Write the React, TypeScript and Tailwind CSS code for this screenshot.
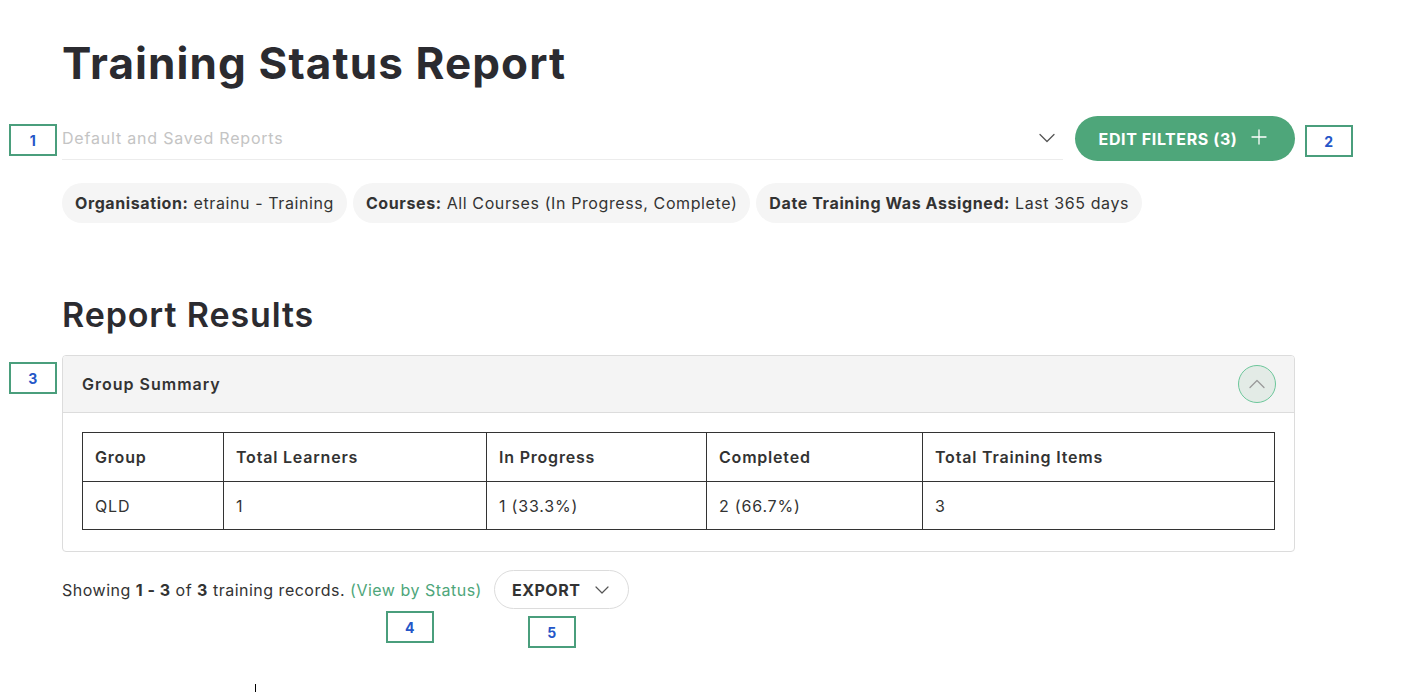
import React from 'react';
import { ChevronDown, ChevronUp, Plus } from 'lucide-react';

const font = { fontFamily: 'Inter, "Noto Sans", sans-serif' };

type Row = { group: string; learners: string; inProgress: string; completed: string; total: string };

const rows: Row[] = [
  { group: 'QLD', learners: '1', inProgress: '1 (33.3%)', completed: '2 (66.7%)', total: '3' },
];

const filters = [
  { label: 'Organisation:', value: 'etrainu - Training' },
  { label: 'Courses:', value: 'All Courses (In Progress, Complete)' },
  { label: 'Date Training Was Assigned:', value: 'Last 365 days' },
];

// numbered callout boxes placed over the page
const Marker: React.FC<{ n: number; className: string }> = ({ n, className }) => (
  <div
    className={`absolute flex h-[32px] w-[48px] items-center justify-center border-2 border-[#4a9e7c] bg-white text-[14px] font-bold text-[#2456c8] ${className}`}
  >
    {n}
  </div>
);

const App: React.FC = () => {
  return (
    <div className="relative h-[692px] w-[1418px] overflow-hidden bg-white text-[#2b2b30] tracking-[0.7px]" style={font}>
      <div className="w-[1295px] pl-[62px] pt-[36px]">
        <h1 className="text-[44px] font-bold leading-[54px] tracking-[1.1px]">Training Status Report</h1>

        <div className="mt-[26px] flex items-center">
          <div className="flex h-[43px] w-[1001px] items-center justify-between border-b border-[#ececec] pr-[2px]">
            <span className="text-[16px] tracking-[0.8px] text-[#c4c4c4]">Default and Saved Reports</span>
            <ChevronDown className="h-[28px] w-[28px] text-[#555]" strokeWidth={1.1} />
          </div>
          <button className="ml-[12px] flex h-[45px] w-[220px] items-center justify-center gap-[10px] rounded-full bg-[#4ea67a] text-[16px] font-bold tracking-[0.6px] text-white">
            <span>EDIT FILTERS (3)</span>
            <Plus className="mb-[3px] h-[24px] w-[24px]" strokeWidth={1.3} />
          </button>
        </div>

        <div className="mt-[22px] flex gap-[6px]">
          {filters.map((f) => (
            <div key={f.label} className="flex h-[40px] items-center rounded-full bg-[#f5f5f5] px-[13px] text-[16px] tracking-[0.6px] text-[#333]">
              <span className="font-bold">{f.label}</span>
              <span className="ml-[5px]">{f.value}</span>
            </div>
          ))}
        </div>

        <h2 className="mt-[70px] text-[34px] font-semibold leading-[44px] tracking-[0.9px]">Report Results</h2>

        <div className="mt-[18px] overflow-hidden rounded-[4px] border border-[#dcdcdc]">
          <div className="flex h-[57px] items-center justify-between border-b border-[#dcdcdc] bg-[#f4f4f4] pl-[19px] pr-[18px]">
            <span className="text-[16px] font-semibold tracking-[1px] text-[#333]">Group Summary</span>
            <div className="flex h-[38px] w-[38px] items-center justify-center rounded-full border border-[#6cc69a] bg-[#e3ebe6]">
              <ChevronUp className="h-[28px] w-[28px] text-[#9a9a9a]" strokeWidth={1.1} />
            </div>
          </div>
          <div className="px-[19px] pb-[21px] pt-[19px]">
            <table className="w-full border-collapse text-left text-[16px] tracking-[0.8px] text-[#333]">
              <thead>
                <tr className="h-[49px]">
                  <th className="w-[141px] border border-[#333] px-[12px] font-semibold">Group</th>
                  <th className="w-[263px] border border-[#333] px-[12px] font-semibold">Total Learners</th>
                  <th className="w-[220px] border border-[#333] px-[12px] font-semibold">In Progress</th>
                  <th className="w-[216px] border border-[#333] px-[12px] font-semibold">Completed</th>
                  <th className="border border-[#333] px-[12px] font-semibold">Total Training Items</th>
                </tr>
              </thead>
              <tbody>
                {rows.map((r) => (
                  <tr key={r.group} className="h-[48px]">
                    <td className="border border-[#333] px-[12px]">{r.group}</td>
                    <td className="border border-[#333] px-[12px]">{r.learners}</td>
                    <td className="border border-[#333] px-[12px]">{r.inProgress}</td>
                    <td className="border border-[#333] px-[12px]">{r.completed}</td>
                    <td className="border border-[#333] px-[12px]">{r.total}</td>
                  </tr>
                ))}
              </tbody>
            </table>
          </div>
        </div>

        <div className="mt-[18px] flex items-center text-[16px] tracking-[0.5px] text-[#333]">
          <span>
            Showing <b>1 - 3</b> of <b>3</b> training records.{' '}
            <span className="text-[#4ea67a]">(View by Status)</span>
          </span>
          <button className="ml-[12px] flex h-[39px] items-center gap-[10px] rounded-full border border-[#dcdcdc] pl-[17px] pr-[14px] font-bold">
            EXPORT
            <ChevronDown className="h-[24px] w-[24px] text-[#555]" strokeWidth={1.2} />
          </button>
        </div>
      </div>

      <Marker n={1} className="left-[9px] top-[124px]" />
      <Marker n={2} className="left-[1305px] top-[125px]" />
      <Marker n={3} className="left-[9px] top-[362px]" />
      <Marker n={4} className="left-[386px] top-[611px]" />
      <Marker n={5} className="left-[528px] top-[616px]" />
      <div className="absolute left-[255px] top-[684px] h-[8px] w-[1px] bg-black" />
    </div>
  );
};

export default App;
